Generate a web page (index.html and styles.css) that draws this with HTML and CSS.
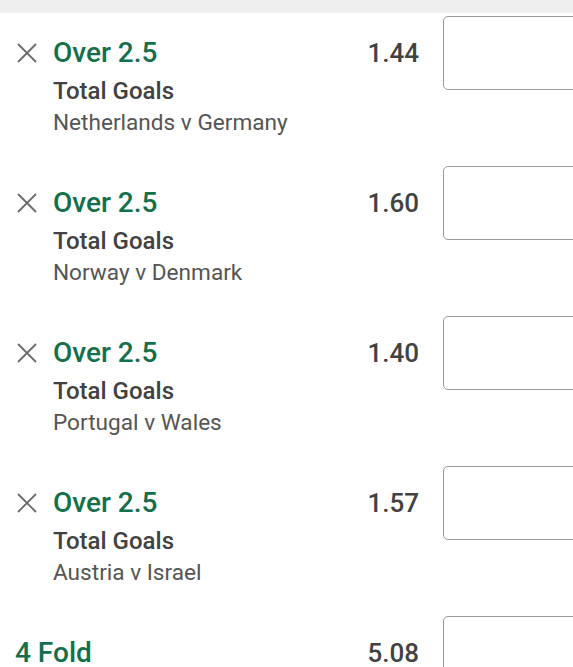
FILE: index.html
```html
<!DOCTYPE html>
<html>
<head>
<meta charset="utf-8">
<link rel="stylesheet" href="styles.css">
</head>
<body>
<div class="topbar"></div>
<div class="slip">
  <div class="row">
    <div class="remove"><svg viewBox="0 0 20 20" width="20" height="20"><path d="M1 1 L19 19 M19 1 L1 19" stroke="#6b6b6b" stroke-width="1.8" fill="none"/></svg></div>
    <div class="info">
      <div class="sel">Over 2.5</div>
      <div class="market">Total Goals</div>
      <div class="event">Netherlands v Germany</div>
    </div>
    <div class="odds">1.44</div>
    <div class="stake"></div>
  </div>
  <div class="row">
    <div class="remove"><svg viewBox="0 0 20 20" width="20" height="20"><path d="M1 1 L19 19 M19 1 L1 19" stroke="#6b6b6b" stroke-width="1.8" fill="none"/></svg></div>
    <div class="info">
      <div class="sel">Over 2.5</div>
      <div class="market">Total Goals</div>
      <div class="event">Norway v Denmark</div>
    </div>
    <div class="odds">1.60</div>
    <div class="stake"></div>
  </div>
  <div class="row">
    <div class="remove"><svg viewBox="0 0 20 20" width="20" height="20"><path d="M1 1 L19 19 M19 1 L1 19" stroke="#6b6b6b" stroke-width="1.8" fill="none"/></svg></div>
    <div class="info">
      <div class="sel">Over 2.5</div>
      <div class="market">Total Goals</div>
      <div class="event">Portugal v Wales</div>
    </div>
    <div class="odds">1.40</div>
    <div class="stake"></div>
  </div>
  <div class="row">
    <div class="remove"><svg viewBox="0 0 20 20" width="20" height="20"><path d="M1 1 L19 19 M19 1 L1 19" stroke="#6b6b6b" stroke-width="1.8" fill="none"/></svg></div>
    <div class="info">
      <div class="sel">Over 2.5</div>
      <div class="market">Total Goals</div>
      <div class="event">Austria v Israel</div>
    </div>
    <div class="odds">1.57</div>
    <div class="stake"></div>
  </div>
  <div class="row multi">
    <div class="info">
      <div class="sel">4 Fold</div>
    </div>
    <div class="odds">5.08</div>
    <div class="stake"></div>
  </div>
</div>
</body>
</html>
```

FILE: styles.css
```css
html, body {
  margin: 0;
  padding: 0;
  background: #fff;
  overflow: hidden;
}
body {
  font-family: Roboto, "Noto Sans", sans-serif;
  width: 573px;
  height: 667px;
}
.topbar {
  height: 13px;
  background: #efefef;
}
.slip {
  display: flex;
  flex-direction: column;
}
.row {
  display: flex;
  align-items: flex-start;
  height: 150px;
  flex: none;
}
.row.multi {
  height: 54px;
  overflow: hidden;
}
.remove {
  width: 53px;
  flex: none;
  padding-top: 30px;
  box-sizing: border-box;
  padding-left: 17px;
  display: flex;
}
.info {
  flex: 1;
  padding-top: 23px;
  min-width: 0;
}
.multi .info {
  padding-left: 15px;
  padding-top: 26px;
}
.sel {
  color: #146f4c;
  font-size: 28px;
  font-weight: 500;
  line-height: 34px;
}
.multi .sel {
  line-height: 28px;
}
.market {
  color: #424242;
  font-size: 24px;
  font-weight: 500;
  line-height: 30px;
  margin-top: 6px;
}
.event {
  color: #555;
  font-size: 22.6px;
  line-height: 28px;
  margin-top: 3px;
}
.odds {
  flex: none;
  padding-top: 23px;
  color: #424242;
  font-size: 26px;
  font-weight: 500;
  line-height: 34px;
  margin-right: 24px;
}
.multi .odds {
  padding-top: 26px;
  line-height: 28px;
}
.stake {
  flex: none;
  margin-top: 3px;
  width: 150px;
  height: 74px;
  box-sizing: border-box;
  border: 1px solid #9a9a9a;
  border-radius: 5px;
  margin-right: -20px;
}
```
